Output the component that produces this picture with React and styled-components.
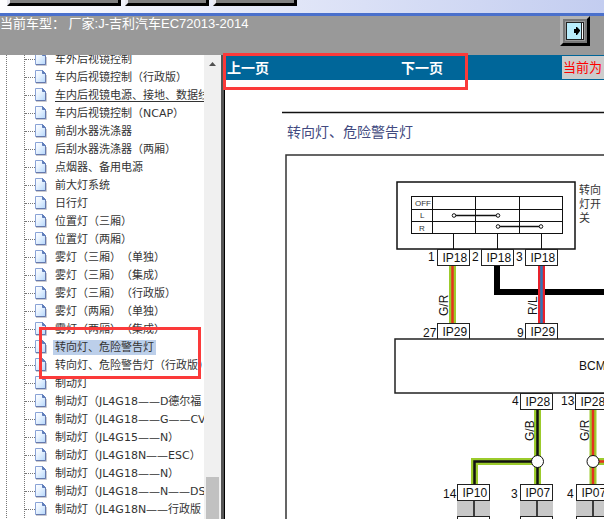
import React, {Fragment} from 'react'
import styled, {createGlobalStyle} from 'styled-components'

const CJK = "'Noto Sans CJK SC', sans-serif"

const GlobalStyle = createGlobalStyle`
  body {
    margin: 0;
    background: #fff;
    font-family: 'Liberation Sans', ${CJK};
    text-spacing-trim: space-all;
  }
  *, *::before, *::after {
    box-sizing: border-box;
  }
`

const Page = styled.div`
  position: relative;
  display: flex;
  flex-direction: column;
  height: 100vh;
  overflow: hidden;
`

const Toolbar = styled.div`
  display: flex;
  flex: none;
  align-items: flex-end;
  gap: 4px;
  height: 16px;
  padding: 0 7px 9px;
  overflow: hidden;
  background: linear-gradient(to right, #fdfdff, #c3cdf0);
  border-bottom: 3px solid #4a70cc;
`

const ToolButton = styled.button`
  flex: none;
  width: ${props => (props.$wide ? 114 : 84)}px;
  height: 24px;
  margin-bottom: -2px;
  padding: 0;
  background: #808080;
  border: 3px solid;
  border-color: #e0e0e0 #000 #000 #e8e8f0;
`

const Header = styled.header`
  display: flex;
  flex: none;
  justify-content: space-between;
  height: 39px;
  padding-right: 14px;
  background: #999;
  color: #fff;
`

const Model = styled.h1`
  margin: 0;
  font-size: 13px;
  font-weight: normal;
  line-height: 15px;
  white-space: pre;
`

const ExitButton = styled.button`
  display: flex;
  align-items: center;
  justify-content: center;
  width: 30px;
  height: 30px;
  padding: 0;
  background: #777;
  border: 3px solid;
  border-color: #b4b4b4 #000 #000 #b4b4b4;
`

const Body = styled.div`
  display: grid;
  grid-template-columns: 225px 1fr;
  flex: 1;
  min-height: 0;
`

const Sidebar = styled.nav`
  display: flex;
  min-height: 0;
  overflow: hidden;
  border-right: 1px solid #000;
  box-shadow: inset -3px 0 #555;
`

const Tree = styled.div`
  flex: 1;
  overflow: hidden;
  padding-left: 6px;
`

const Branch = styled.div`
  padding-left: 17px;
  border-left: 1px dotted #777;
`

const Leaves = styled.ul`
  margin: -5px 0 0;
  padding: 0;
  list-style: none;
  border-left: 1px dotted #777;
`

const Leaf = styled.li`
  display: flex;
  align-items: center;
  height: 18px;
  white-space: nowrap;

  &::before {
    content: '';
    flex: none;
    width: 10px;
    border-top: 1px dotted #777;
  }
  > svg {
    flex: none;
  }
`

const LeafLink = styled.a`
  margin-left: 5px;
  padding: 0 2px;
  color: #333;
  background: ${props => (props.$selected ? '#bccfea' : 'none')};
  font-family: 'DejaVu Sans', ${CJK};
  font-size: 11px;
  line-height: 15px;
  text-decoration: ${props => (props.$underlined ? 'underline' : 'none')};
  text-underline-offset: 2px;
`

const Scrollbar = styled.div`
  display: flex;
  flex: none;
  flex-direction: column;
  align-items: center;
  justify-content: space-between;
  width: 17px;
  margin-right: 3px;
  padding-top: 7px;
  background: #f0f0f0;
`

const Thumb = styled.div`
  width: 13px;
  height: 42px;
  background: #c1c1c1;
`

const Main = styled.main`
  display: flex;
  flex-direction: column;
  min-width: 0;
  min-height: 0;
  overflow: hidden;
`

const Pager = styled.div`
  display: grid;
  flex: none;
  grid-template-columns: 174px 161px 1fr;
  align-items: center;
  height: 25px;
  padding-left: 2px;
  background: #069;
`

const PagerLink = styled.a`
  color: #fff;
  font-size: 14px;
  font-weight: bold;
  line-height: 20px;
  text-decoration: none;
`

const Status = styled.span`
  height: 23px;
  padding-left: 1px;
  overflow: hidden;
  background: #ccc;
  color: #f00;
  font-size: 13px;
  line-height: 23px;
  white-space: nowrap;
`

const Diagram = styled.svg`
  display: block;
  flex: none;
  font-family: 'Liberation Sans', ${CJK};
  font-size: 12px;
  fill: #111;
`

const Marker = styled.div`
  position: absolute;
  border: 3px solid #fb3a3a;
  pointer-events: none;
`

const PagerMarker = styled(Marker)`
  top: 53px;
  left: 223px;
  width: 245px;
  height: 37px;
`

const LeafMarker = styled(Marker)`
  top: 327px;
  left: 39px;
  width: 162px;
  height: 52px;
`

const leaves = [
  '车外后视镜控制',
  '车内后视镜控制（行政版）',
  '车内后视镜电源、接地、数据线',
  '车内后视镜控制（NCAP）',
  '前刮水器洗涤器',
  '后刮水器洗涤器（两厢）',
  '点烟器、备用电源',
  '前大灯系统',
  '日行灯',
  '位置灯（三厢）',
  '位置灯（两厢）',
  '雾灯（三厢）（单独）',
  '雾灯（三厢）（集成）',
  '雾灯（三厢）（行政版）',
  '雾灯（两厢）（单独）',
  '雾灯（两厢）（集成）',
  '转向灯、危险警告灯',
  '转向灯、危险警告灯（行政版）',
  '制动灯',
  '制动灯（JL4G18——D德尔福',
  '制动灯（JL4G18——G——CV',
  '制动灯（JL4G15——N）',
  '制动灯（JL4G18N——ESC）',
  '制动灯（JL4G18——N）',
  '制动灯（JL4G18——N——DS',
  '制动灯（JL4G18N——行政版',
]

const PageIcon = () => (
  <svg width="13" height="14" viewBox="0 0 13 14">
    <defs>
      <linearGradient id="sheet" x1="0" y1="0" x2="1" y2="1">
        <stop offset="0" stopColor="#fff" />
        <stop offset="0.4" stopColor="#eaf4ff" />
        <stop offset="1" stopColor="#b4d6fb" />
      </linearGradient>
    </defs>
    <path d="M1 13.5H11.5V5" fill="none" stroke="#c9c9cf" />
    <path d="M0.5 0.5H7.5L10.5 3.5V12.5H0.5Z" fill="url(#sheet)" stroke="#8aa3d6" />
    <path d="M7.5 0.5V3.5H10.5Z" fill="#5f7dbb" stroke="#5f7dbb" />
    <path d="M10.5 4V12.5H1" fill="none" stroke="#6579ad" />
  </svg>
)

const ExitIcon = () => (
  <svg width="20" height="20" viewBox="0 0 20 20">
    <path d="M0 0H20V20H0Z" fill="#999" />
    <path d="M1 1H19V19H1Z" fill="#222" />
    <path d="M2 2H16V18H2Z" fill="#b9edfc" />
    <path d="M17 2H18V18H17Z" fill="#fff" />
    <path d="M9 8H11V6H12L15 9V10L12 14H11V12H9Z" fill="#000" />
  </svg>
)

// box with a connector name, pin number on its left
const Connector = ({x, y, name, pin, pinX, pinY}) => (
  <g>
    <rect x={x} y={y} width="32" height="16" fill="#fff" stroke="#222" />
    <text x={x + 5} y={y + 12}>{name}</text>
    <text x={pinX} y={pinY}>{pin}</text>
  </g>
)

const Wire = ({d, color, core}) => (
  <g fill="none">
    <path d={d} stroke={color} strokeWidth="7" />
    <path d={d} stroke={core} strokeWidth="2.5" />
  </g>
)

const WireLabel = ({x, y, children}) => (
  <text transform={`translate(${x} ${y}) rotate(-90)`}>{children}</text>
)

const Socket = ({x}) => (
  <g>
    <rect x={x} y="501" width="33" height="15" fill="#c8c8c8" />
    <path d={`M${x + 17} 501V516`} stroke="#111" strokeWidth="1.5" />
    <rect x={x + 0.5} y="516.5" width="32" height="16" fill="#fff" stroke="#222" />
  </g>
)

const GREEN = '#9ccb2c'
const RED = '#e3321f'

const Wiring = () => (
  <Diagram width="700" height="600" viewBox="225 80 700 600">
    <path d="M282 112.5H900" stroke="#111" strokeWidth="1.5" />
    <text x="287" y="137" fontSize="14" fill="#424a80">转向灯、危险警告灯</text>
    <path d="M900 155H286V700" fill="none" stroke="#333" strokeWidth="1.5" />

    <g fill="none" stroke="#111">
      <rect x="397" y="182" width="178" height="67" strokeWidth="1.5" />
      <rect x="411.5" y="196.5" width="151" height="37" />
      <path d="M411 209.5H562M411 221.5H562M432.5 197V233M475.5 197V233M519.5 197V233" />
      <path d="M453.5 233V249M497.5 233V249M541.5 233V249" />
      <path d="M454 215.5H498M498 226.5H541" strokeWidth="1.5" />
      <g fill="#fff">
        <circle cx="454" cy="215.5" r="1.8" />
        <circle cx="498" cy="215.5" r="1.8" />
        <circle cx="498" cy="226.5" r="1.8" />
        <circle cx="541" cy="226.5" r="1.8" />
      </g>
    </g>
    <g fontSize="8" fill="#333">
      <text x="415" y="206">OFF</text>
      <text x="420" y="218">L</text>
      <text x="419" y="231">R</text>
    </g>
    <g fontSize="11" fill="#333">
      <text x="579" y="194">转向</text>
      <text x="579" y="208">灯开</text>
      <text x="579" y="222">关</text>
    </g>

    <path d="M497 265V292H900" fill="none" stroke="#000" strokeWidth="6" />
    <Wire d="M452.5 265V323" color={GREEN} core={RED} />
    <Wire d="M541.5 265V323" color="#e8222c" core="#2f78b8" />
    <WireLabel x={448} y={316}>G/R</WireLabel>
    <WireLabel x={537} y={315}>R/L</WireLabel>
    <Connector x={437.5} y={249.5} name="IP18" pin="1" pinX={428} pinY={261} />
    <Connector x={481.5} y={249.5} name="IP18" pin="2" pinX={472} pinY={261} />
    <Connector x={525.5} y={249.5} name="IP18" pin="3" pinX={516} pinY={261} />
    <Connector x={437.5} y={323.5} name="IP29" pin="27" pinX={423} pinY={337} />
    <Connector x={525.5} y={323.5} name="IP29" pin="9" pinX={517} pinY={337} />

    <rect x="395" y="339" width="500" height="54" fill="#fff" stroke="#222" strokeWidth="1.5" />
    <text x="579" y="370">BCM</text>

    <Wire d="M537.5 409V485" color={GREEN} core="#111" />
    <Wire d="M537.5 461.5H474.5V485" color={GREEN} core="#111" />
    <Wire d="M593 409V485" color={GREEN} core={RED} />
    <Wire d="M593 461.5H900" color={GREEN} core={RED} />
    <g fill="#fff" stroke="#111">
      <circle cx="537.5" cy="461.5" r="6" />
      <circle cx="593" cy="461.5" r="6" />
    </g>
    <WireLabel x={534} y={441}>G/B</WireLabel>
    <WireLabel x={589} y={441}>G/R</WireLabel>
    <Connector x={520.5} y={393.5} name="IP28" pin="4" pinX={512} pinY={405} />
    <Connector x={575.5} y={393.5} name="IP28" pin="13" pinX={561} pinY={405} />
    <Connector x={457.5} y={484.5} name="IP10" pin="14" pinX={443} pinY={498} />
    <Connector x={520.5} y={484.5} name="IP07" pin="3" pinX={511} pinY={498} />
    <Connector x={576.5} y={484.5} name="IP07" pin="4" pinX={567} pinY={498} />
    <Socket x={457} />
    <Socket x={520} />
    <Socket x={576} />
  </Diagram>
)

export default () => (
  <Fragment>
    <GlobalStyle />
    <Page>
      <Toolbar>
        <ToolButton $wide aria-label="Menu" />
        <ToolButton aria-label="Back" />
        <ToolButton aria-label="Print" />
      </Toolbar>
      <Header>
        <Model>当前车型： 厂家:J-吉利汽车EC72013-2014</Model>
        <ExitButton aria-label="Exit">
          <ExitIcon />
        </ExitButton>
      </Header>
      <Body>
        <Sidebar>
          <Tree>
            <Branch>
              <Leaves>
                {leaves.map((leaf, i) => (
                  <Leaf key={leaf}>
                    <PageIcon />
                    <LeafLink href="#" $selected={i === 16} $underlined={i === 2}>
                      {leaf}
                    </LeafLink>
                  </Leaf>
                ))}
              </Leaves>
            </Branch>
          </Tree>
          <Scrollbar>
            <svg width="7" height="4" viewBox="0 0 7 4">
              <path d="M0 4L3.5 0L7 4Z" fill="#505050" />
            </svg>
            <Thumb />
          </Scrollbar>
        </Sidebar>
        <Main>
          <Pager>
            <PagerLink href="#">上一页</PagerLink>
            <PagerLink href="#">下一页</PagerLink>
            <Status>当前为</Status>
          </Pager>
          <Wiring />
        </Main>
      </Body>
      <PagerMarker />
      <LeafMarker />
    </Page>
  </Fragment>
)
